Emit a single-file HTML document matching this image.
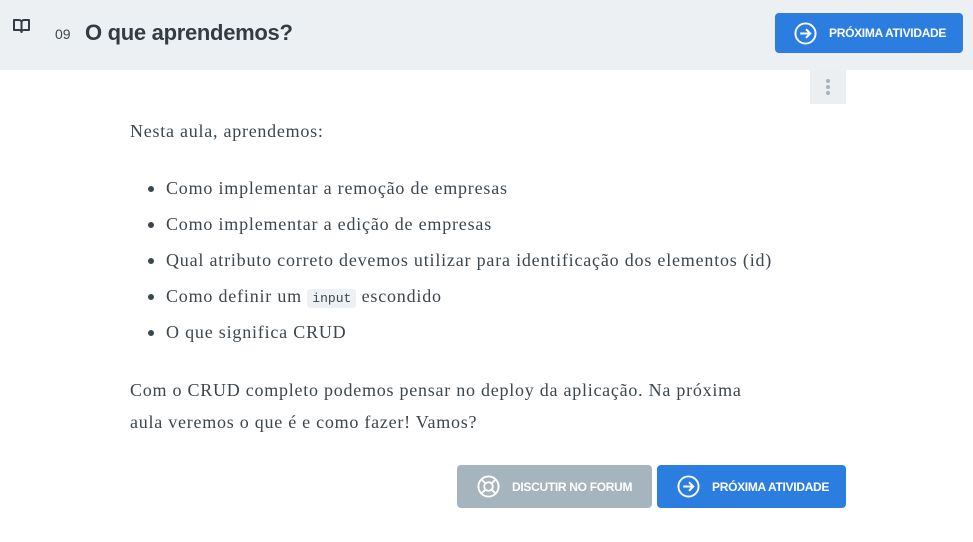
<!DOCTYPE html>
<html><head><meta charset="utf-8"><style>
*{margin:0;padding:0;box-sizing:border-box}
body{width:973px;height:542px;background:#fff;font-family:"Liberation Sans",sans-serif;position:relative;overflow:hidden}
.hdr{position:absolute;left:0;top:0;width:973px;height:70px;background:#edf0f2}
.num{position:absolute;left:55px;top:26px;font-size:14px;color:#3d464d}
.title{position:absolute;left:85px;top:20px;font-size:22px;font-weight:bold;color:#333c44;letter-spacing:-0.3px}
.btn{position:absolute;border-radius:4px;color:#fff;font-weight:bold;font-size:12px;display:flex;align-items:center;letter-spacing:-0.3px}
.blue{background:#2b7de0}
.grey{background:#a5b4bd}
.btn svg{margin-right:12px}
.dots{position:absolute;left:810px;top:70px;width:36px;height:34px;background:#eceff1}
.dots i{position:absolute;left:16px;width:4px;height:4px;border-radius:2px;background:#a8b2b9}
.txt{position:absolute;font-family:"Liberation Serif",serif;font-size:18px;color:#3d464d;letter-spacing:0.75px}
ul{position:absolute;left:148px;top:178px;list-style:none}
li{height:36px;position:relative;padding-left:18px;font-family:"Liberation Serif",serif;font-size:18px;color:#3d464d;letter-spacing:0.8px}
li:before{content:"";position:absolute;left:0;top:8px;width:6px;height:6px;border-radius:3px;background:#3d464d}
code{font-family:"Liberation Mono",monospace;font-size:13px;background:#eef1f3;padding:2px 5px;letter-spacing:0;border-radius:3px}
</style></head><body>
<div class="hdr">
<svg style="position:absolute;left:13px;top:18px" width="17" height="16" viewBox="0 0 17 16" fill="none" stroke="#333c44" stroke-width="2" stroke-linejoin="round"><path d="M1 2h5c1.5 0 2.5 1 2.5 2.5V14c0-1-1-2-2.5-2H1z"/><path d="M16 2h-5c-1.5 0-2.5 1-2.5 2.5V14c0-1 1-2 2.5-2H16z"/></svg>
<div class="num">09</div>
<div class="title">O que aprendemos?</div>
<div class="btn blue" style="left:775px;top:13px;width:188px;height:40px;padding-left:19px">
<svg width="23" height="23" viewBox="0 0 24 24" fill="none" stroke="#fff" stroke-width="2"><circle cx="12" cy="12" r="10.5"/><path d="M6.5 12h10M12.5 7.5l4.5 4.5-4.5 4.5"/></svg>PRÓXIMA ATIVIDADE</div>
</div>
<div class="dots"><i style="top:9px"></i><i style="top:15px"></i><i style="top:21px"></i></div>
<div class="txt" style="left:130px;top:121px">Nesta aula, aprendemos:</div>
<ul>
<li>Como implementar a remoção de empresas</li>
<li>Como implementar a edição de empresas</li>
<li>Qual atributo correto devemos utilizar para identificação dos elementos (id)</li>
<li>Como definir um <code>input</code> escondido</li>
<li>O que significa CRUD</li>
</ul>
<div class="txt" style="left:130px;top:374px;line-height:32px">Com o CRUD completo podemos pensar no deploy da aplicação. Na próxima<br>aula veremos o que é e como fazer! Vamos?</div>
<div class="btn grey" style="left:457px;top:465px;width:195px;height:43px;padding-left:20px">
<svg width="23" height="23" viewBox="0 0 24 24" fill="none" stroke="#fff" stroke-width="2"><circle cx="12" cy="12" r="10.5"/><circle cx="12" cy="12" r="4.5"/><path d="M4.6 4.6l4.2 4.2M19.4 4.6l-4.2 4.2M4.6 19.4l4.2-4.2M19.4 19.4l-4.2-4.2"/></svg>DISCUTIR NO FORUM</div>
<div class="btn blue" style="left:657px;top:465px;width:189px;height:43px;padding-left:20px">
<svg width="23" height="23" viewBox="0 0 24 24" fill="none" stroke="#fff" stroke-width="2"><circle cx="12" cy="12" r="10.5"/><path d="M6.5 12h10M12.5 7.5l4.5 4.5-4.5 4.5"/></svg>PRÓXIMA ATIVIDADE</div>
</body></html>
